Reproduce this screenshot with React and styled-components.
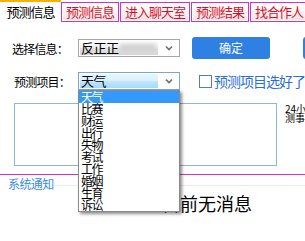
import React from 'react';
import styled, {createGlobalStyle} from 'styled-components';

const GlobalStyle = createGlobalStyle`
  html, body {
    margin: 0;
    padding: 0;
    overflow: hidden;
    background: #ffffff;
  }
  body {
    font-family: "Noto Sans CJK SC", "Microsoft YaHei", sans-serif;
    color: #000;
  }
`;

const Page = styled.div`
  position: relative;
  width: 305px;
  height: 241px;
  overflow: hidden;
`;

const TabBar = styled.div`
  display: flex;
  align-items: flex-end;
  height: 22px;
  white-space: nowrap;
`;

const ActiveTab = styled.div`
  box-sizing: border-box;
  width: 61px;
  height: 22px;
  flex-shrink: 0;
  border-top: 2px solid #f6b400;
  background: #fff;
  font-size: 13px;
  letter-spacing: -1px;
  line-height: 19px;
  text-align: center;
`;

const Tab = styled.div`
  box-sizing: border-box;
  flex-shrink: 0;
  height: 20px;
  margin-right: 1px;
  padding: 0 4px;
  border: 1px solid #cc33cc;
  background: linear-gradient(#ffffff 0%, #fbf3f3 50%, #efe2e2 100%);
  box-shadow: inset 0 0 0 1px #ffffff;
  color: #d4102c;
  font-size: 13px;
  letter-spacing: -1px;
  line-height: 18px;
`;

const TabLine = styled.div`
  flex: 1;
  border-bottom: 1px solid #cc33cc;
`;

const Form = styled.div`
  display: flex;
  flex-direction: column;
  padding-top: 15px;
`;

const Row = styled.div`
  display: flex;
  align-items: center;
  height: 22px;
  margin-top: ${p => p.$gap || 0}px;
  white-space: nowrap;
`;

const Label = styled.div`
  box-sizing: border-box;
  width: 78px;
  flex-shrink: 0;
  padding-left: ${p => p.$indent}px;
  font-size: 12px;
  letter-spacing: -0.8px;
`;

const Select = styled.div`
  position: relative;
  box-sizing: border-box;
  display: flex;
  align-items: stretch;
  width: 102px;
  height: 18px;
  flex-shrink: 0;
  border: 1px solid ${p => (p.$focused ? '#7ea4cf' : '#a6a6a6')};
  background: #fff;
`;

const SelectValue = styled.div`
  position: relative;
  flex: 1;
  margin: 1px 0 1px 1px;
  padding-left: 1px;
  font-size: 13px;
  line-height: 14px;
  letter-spacing: -0.5px;
  background: ${p => (p.$focused
    ? 'linear-gradient(#eaf6fd 0%, #d9f0fc 45%, #bee6fd 55%, #a7d9f5 100%)'
    : 'linear-gradient(#ffffff 0%, #f0f0f0 45%, #e2e2e2 55%, #d6d6d6 100%)')};
`;

const Blur = styled.span`
  position: absolute;
  left: 40px;
  right: 2px;
  top: 3px;
  bottom: 3px;
  background: #d2d2d2;
  filter: blur(2px);
`;

const Arrow = styled.div`
  width: 21px;
  display: flex;
  align-items: center;
  justify-content: center;
`;

const Button = styled.div`
  width: 78px;
  height: 22px;
  flex-shrink: 0;
  margin-left: ${p => p.$gap}px;
  border-radius: 3px;
  background: #2e80e2;
  color: #fff;
  font-size: 12px;
  line-height: 22px;
  text-align: center;
`;

const Check = styled.label`
  display: flex;
  align-items: center;
  margin-left: 19px;
  color: #2b6fd6;
  font-size: 14px;
  letter-spacing: -1px;
`;

const Box = styled.span`
  box-sizing: border-box;
  width: 13px;
  height: 13px;
  margin-right: 2px;
  border: 1px solid #4f7fbf;
  background: #fff;
`;

const NoteRow = styled.div`
  display: flex;
  align-items: flex-start;
  margin-top: 11px;
  padding-left: 14px;
`;

const TextArea = styled.div`
  box-sizing: border-box;
  width: 263px;
  height: 63px;
  flex-shrink: 0;
  border: 1px solid #8fb6d3;
  background: #fff;
`;

const SideText = styled.div`
  margin-left: 8px;
  margin-top: 1px;
  font-size: 10px;
  line-height: 9px;
  white-space: nowrap;
`;

const Divider = styled.div`
  margin-top: 8px;
  border-top: 1px solid #cc33cc;
`;

const NoticeHead = styled.div`
  display: flex;
  align-items: flex-start;
  height: 20px;
`;

const NoticeTab = styled.div`
  padding: 2px 0 0 8px;
  color: #3a8ae6;
  font-size: 12px;
  letter-spacing: -0.6px;
  line-height: 14px;
`;

const NoticeLine = styled.div`
  flex: 1;
  margin-top: 10px;
  border-top: 1px solid #ececec;
`;

const Empty = styled.div`
  padding-left: 162px;
  margin-top: -2px;
  font-size: 18px;
  line-height: 20px;
  white-space: nowrap;
`;

const DropList = styled.ul`
  position: absolute;
  left: 78px;
  top: 90px;
  box-sizing: border-box;
  width: 102px;
  margin: 0;
  padding: 0;
  list-style: none;
  border: 1px solid #8a8a8a;
  background: #fff;
  box-shadow: 2px 2px 3px rgba(0, 0, 0, 0.45);
`;

const DropItem = styled.li`
  height: 12px;
  padding-left: 2px;
  font-size: 12px;
  line-height: 12px;
  letter-spacing: -1.5px;
  color: ${p => (p.$active ? '#fff' : '#000')};
  background: ${p => (p.$active ? '#3399ff' : 'transparent')};
  overflow: visible;
`;

const Chevron = () => (
    <svg width="8" height="6" viewBox="0 0 8 6">
        <polyline points="1,1.5 4,4.5 7,1.5" fill="none" stroke="#6d6d6d" strokeWidth="1.6"/>
    </svg>
);

const tabs = ['预测信息', '进入聊天室', '预测结果', '找合作人'];
const items = ['天气', '比赛', '财运', '出行', '失物', '考试', '工作', '婚姻', '生育', '诉讼'];

export default function App() {
    return (
        <Page>
            <GlobalStyle/>
            <TabBar>
                <ActiveTab>预测信息</ActiveTab>
                {tabs.map(t => <Tab key={t}>{t}</Tab>)}
                <TabLine/>
            </TabBar>
            <Form>
                <Row>
                    <Label $indent={12}>选择信息：</Label>
                    <Select>
                        <SelectValue>反正正<Blur/></SelectValue>
                        <Arrow><Chevron/></Arrow>
                    </Select>
                    <Button $gap={12}>确定</Button>
                    <Button $gap={33}/>
                </Row>
                <Row $gap={11}>
                    <Label $indent={14}>预测项目：</Label>
                    <Select $focused>
                        <SelectValue $focused>天气</SelectValue>
                        <Arrow><Chevron/></Arrow>
                    </Select>
                    <Check><Box/>预测项目选好了</Check>
                </Row>
                <NoteRow>
                    <TextArea/>
                    <SideText>24小时内<br/>测事项</SideText>
                </NoteRow>
                <Divider/>
                <NoticeHead>
                    <NoticeTab>系统通知</NoticeTab>
                    <NoticeLine/>
                </NoticeHead>
                <Empty>目前无消息</Empty>
            </Form>
            <DropList>
                {items.map((it, i) => <DropItem key={it} $active={i === 0}>{it}</DropItem>)}
            </DropList>
        </Page>
    );
}
